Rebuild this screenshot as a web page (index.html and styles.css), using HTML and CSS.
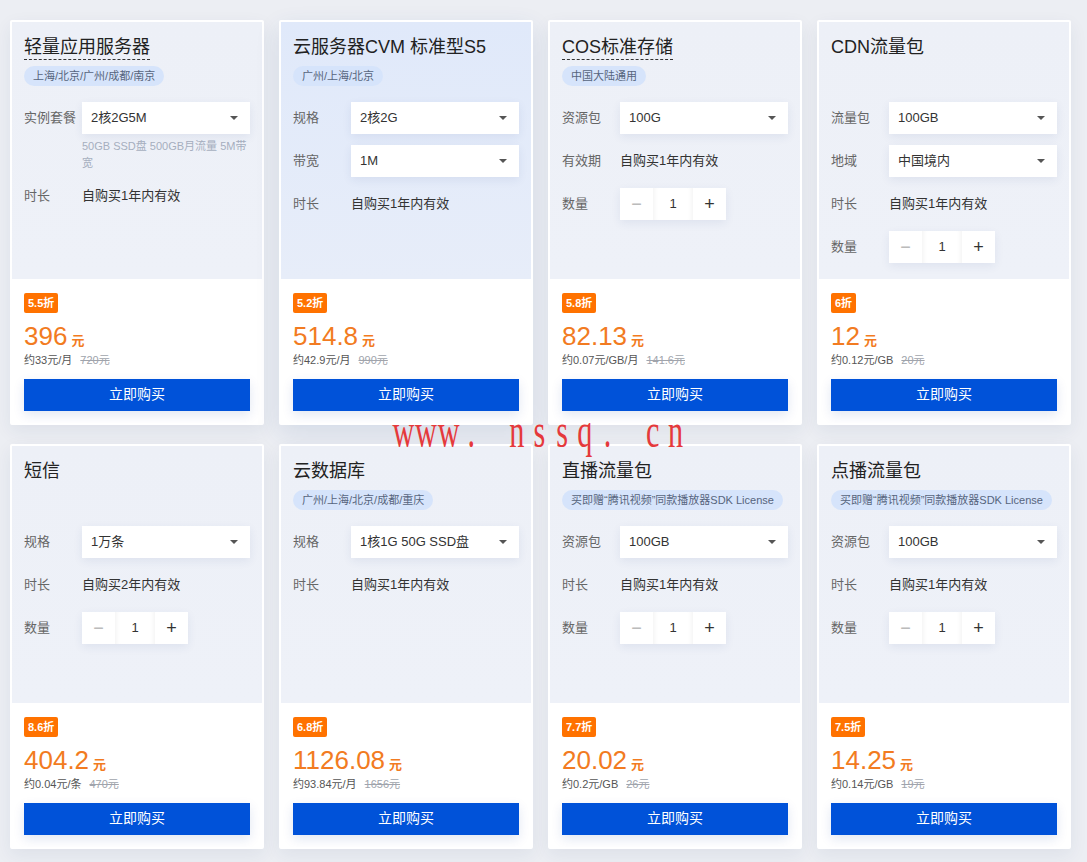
FILE: index.html
```html
<!DOCTYPE html>
<html lang="zh-CN">
<head>
<meta charset="utf-8">
<title>产品</title>
<link rel="stylesheet" href="styles.css">
</head>
<body>
<div class="grid">

  <div class="card">
    <div class="card-top">
      <div class="title"><span class="dashed">轻量应用服务器</span></div>
      <div class="tags"><span class="tag">上海/北京/广州/成都/南京</span></div>
      <div class="form">
        <div class="row"><span class="label">实例套餐</span><div class="select">2核2G5M<i class="caret"></i></div></div>
        <div class="help">50GB SSD盘 500GB月流量 5M带宽</div>
        <div class="row"><span class="label">时长</span><span class="value">自购买1年内有效</span></div>
      </div>
    </div>
    <div class="card-bottom">
      <span class="badge">5.5折</span>
      <div class="price">396<span class="unit">元</span></div>
      <div class="sub">约33元/月<s class="orig">720元</s></div>
      <button class="buy">立即购买</button>
    </div>
  </div>

  <div class="card active">
    <div class="card-top">
      <div class="title"><span>云服务器CVM 标准型S5</span></div>
      <div class="tags"><span class="tag">广州/上海/北京</span></div>
      <div class="form">
        <div class="row"><span class="label">规格</span><div class="select">2核2G<i class="caret"></i></div></div>
        <div class="row"><span class="label">带宽</span><div class="select">1M<i class="caret"></i></div></div>
        <div class="row"><span class="label">时长</span><span class="value">自购买1年内有效</span></div>
      </div>
    </div>
    <div class="card-bottom">
      <span class="badge">5.2折</span>
      <div class="price">514.8<span class="unit">元</span></div>
      <div class="sub">约42.9元/月<s class="orig">990元</s></div>
      <button class="buy">立即购买</button>
    </div>
  </div>

  <div class="card">
    <div class="card-top">
      <div class="title"><span class="dashed">COS标准存储</span></div>
      <div class="tags"><span class="tag">中国大陆通用</span></div>
      <div class="form">
        <div class="row"><span class="label">资源包</span><div class="select">100G<i class="caret"></i></div></div>
        <div class="row"><span class="label">有效期</span><span class="value">自购买1年内有效</span></div>
        <div class="row"><span class="label">数量</span><div class="stepper"><span class="step minus">−</span><span class="num">1</span><span class="step plus">+</span></div></div>
      </div>
    </div>
    <div class="card-bottom">
      <span class="badge">5.8折</span>
      <div class="price">82.13<span class="unit">元</span></div>
      <div class="sub">约0.07元/GB/月<s class="orig">141.6元</s></div>
      <button class="buy">立即购买</button>
    </div>
  </div>

  <div class="card">
    <div class="card-top">
      <div class="title"><span>CDN流量包</span></div>
      <div class="tags"></div>
      <div class="form">
        <div class="row"><span class="label">流量包</span><div class="select">100GB<i class="caret"></i></div></div>
        <div class="row"><span class="label">地域</span><div class="select">中国境内<i class="caret"></i></div></div>
        <div class="row"><span class="label">时长</span><span class="value">自购买1年内有效</span></div>
        <div class="row"><span class="label">数量</span><div class="stepper"><span class="step minus">−</span><span class="num">1</span><span class="step plus">+</span></div></div>
      </div>
    </div>
    <div class="card-bottom">
      <span class="badge">6折</span>
      <div class="price">12<span class="unit">元</span></div>
      <div class="sub">约0.12元/GB<s class="orig">20元</s></div>
      <button class="buy">立即购买</button>
    </div>
  </div>

  <div class="card">
    <div class="card-top">
      <div class="title"><span>短信</span></div>
      <div class="tags"></div>
      <div class="form">
        <div class="row"><span class="label">规格</span><div class="select">1万条<i class="caret"></i></div></div>
        <div class="row"><span class="label">时长</span><span class="value">自购买2年内有效</span></div>
        <div class="row"><span class="label">数量</span><div class="stepper"><span class="step minus">−</span><span class="num">1</span><span class="step plus">+</span></div></div>
      </div>
    </div>
    <div class="card-bottom">
      <span class="badge">8.6折</span>
      <div class="price">404.2<span class="unit">元</span></div>
      <div class="sub">约0.04元/条<s class="orig">470元</s></div>
      <button class="buy">立即购买</button>
    </div>
  </div>

  <div class="card">
    <div class="card-top">
      <div class="title"><span>云数据库</span></div>
      <div class="tags"><span class="tag">广州/上海/北京/成都/重庆</span></div>
      <div class="form">
        <div class="row"><span class="label">规格</span><div class="select">1核1G 50G SSD盘<i class="caret"></i></div></div>
        <div class="row"><span class="label">时长</span><span class="value">自购买1年内有效</span></div>
      </div>
    </div>
    <div class="card-bottom">
      <span class="badge">6.8折</span>
      <div class="price">1126.08<span class="unit">元</span></div>
      <div class="sub">约93.84元/月<s class="orig">1656元</s></div>
      <button class="buy">立即购买</button>
    </div>
  </div>

  <div class="card">
    <div class="card-top">
      <div class="title"><span>直播流量包</span></div>
      <div class="tags"><span class="tag">买即赠“腾讯视频”同款播放器SDK License</span></div>
      <div class="form">
        <div class="row"><span class="label">资源包</span><div class="select">100GB<i class="caret"></i></div></div>
        <div class="row"><span class="label">时长</span><span class="value">自购买1年内有效</span></div>
        <div class="row"><span class="label">数量</span><div class="stepper"><span class="step minus">−</span><span class="num">1</span><span class="step plus">+</span></div></div>
      </div>
    </div>
    <div class="card-bottom">
      <span class="badge">7.7折</span>
      <div class="price">20.02<span class="unit">元</span></div>
      <div class="sub">约0.2元/GB<s class="orig">26元</s></div>
      <button class="buy">立即购买</button>
    </div>
  </div>

  <div class="card">
    <div class="card-top">
      <div class="title"><span>点播流量包</span></div>
      <div class="tags"><span class="tag">买即赠“腾讯视频”同款播放器SDK License</span></div>
      <div class="form">
        <div class="row"><span class="label">资源包</span><div class="select">100GB<i class="caret"></i></div></div>
        <div class="row"><span class="label">时长</span><span class="value">自购买1年内有效</span></div>
        <div class="row"><span class="label">数量</span><div class="stepper"><span class="step minus">−</span><span class="num">1</span><span class="step plus">+</span></div></div>
      </div>
    </div>
    <div class="card-bottom">
      <span class="badge">7.5折</span>
      <div class="price">14.25<span class="unit">元</span></div>
      <div class="sub">约0.14元/GB<s class="orig">19元</s></div>
      <button class="buy">立即购买</button>
    </div>
  </div>

</div>
<div class="watermark"><span>w</span><span>w</span><span>w</span><span>.</span><span> </span><span>n</span><span>s</span><span>s</span><span>q</span><span>.</span><span> </span><span>c</span><span>n</span></div>
</body>
</html>
```

FILE: styles.css
```css
* { box-sizing: border-box; }

html, body {
  margin: 0;
  padding: 0;
}

body {
  background: #eceef3;
  font-family: "Liberation Sans", "Noto Sans CJK SC", sans-serif;
  color: #333;
  position: relative;
  width: 1087px;
  height: 862px;
  overflow: hidden;
}

.grid {
  display: grid;
  grid-template-columns: repeat(4, 254px);
  grid-auto-rows: 405px;
  column-gap: 15px;
  row-gap: 19px;
  padding: 20px 0 0 10px;
}

.card {
  display: flex;
  flex-direction: column;
  border: 2px solid #fff;
  border-radius: 2px;
  background: #fff;
  box-shadow: 0 6px 18px rgba(30, 55, 100, 0.07);
  overflow: hidden;
}

.card-top {
  height: 257px;
  flex: none;
  padding: 13px 12px 0;
  background: linear-gradient(180deg, #edf0f7 0%, #eef1f8 100%);
}

.card.active {
  border-color: transparent;
  box-shadow: 0 8px 24px rgba(30, 70, 140, 0.12);
}

.card.active .card-top {
  background: linear-gradient(180deg, #e0e9fa 0%, #e7edf9 100%);
}

.title {
  height: 25px;
  font-size: 18px;
  line-height: 24px;
  color: #222;
}

.title span {
  display: inline-block;
  border-bottom: 1px solid transparent;
}

.title .dashed {
  border-bottom: 1px dashed #333;
}

.tags {
  height: 20px;
  margin-top: 6px;
}

.tag {
  display: inline-block;
  height: 20px;
  line-height: 20px;
  padding: 0 9px;
  border-radius: 10px;
  background: #d6e4fb;
  color: #56647d;
  font-size: 11px;
  white-space: nowrap;
}

.form {
  margin-top: 16px;
}

.row {
  display: flex;
  align-items: center;
  height: 32px;
  margin-bottom: 11px;
  line-height: 18px;
}

.label {
  width: 58px;
  flex: none;
  font-size: 13px;
  color: #666;
}

.value {
  font-size: 13px;
  color: #333;
}

.select {
  position: relative;
  width: 168px;
  height: 32px;
  line-height: 32px;
  padding-left: 9px;
  background: #fff;
  font-size: 13px;
  color: #333;
  box-shadow: 0 3px 10px rgba(40, 70, 130, 0.08);
}

.caret {
  position: absolute;
  right: 12px;
  top: 14px;
  width: 0;
  height: 0;
  border-left: 4px solid transparent;
  border-right: 4px solid transparent;
  border-top: 4px solid #555;
}

.help {
  margin: -7px 0 8px 58px;
  width: 168px;
  font-size: 11px;
  line-height: 17px;
  color: #a6afbf;
}

.stepper {
  display: flex;
  height: 32px;
  box-shadow: 0 3px 10px rgba(40, 70, 130, 0.08);
}

.step, .num {
  display: flex;
  align-items: center;
  justify-content: center;
  height: 32px;
  background: #fff;
}

.step {
  width: 33px;
  font-size: 18px;
  color: #333;
}

.step.minus {
  color: #bbb;
}

.num {
  width: 40px;
  font-size: 13px;
  color: #333;
  box-shadow: inset 6px 0 6px -6px rgba(0, 0, 0, 0.08), inset -6px 0 6px -6px rgba(0, 0, 0, 0.08);
}

.card-bottom {
  flex: 1;
  padding: 14px 12px 12px;
  background: #fff;
  display: flex;
  flex-direction: column;
  align-items: flex-start;
}

.badge {
  display: inline-block;
  height: 20px;
  line-height: 20px;
  padding: 0 4px;
  background: #ff7200;
  color: #fff;
  font-size: 11px;
  font-weight: bold;
  border-radius: 2px;
}

.price {
  margin-top: 8px;
  height: 30px;
  line-height: 30px;
  font-size: 26px;
  color: #f27b21;
}

.unit {
  font-size: 13px;
  font-weight: bold;
  margin-left: 4px;
}

.sub {
  margin-top: 1px;
  height: 16px;
  line-height: 16px;
  font-size: 11px;
  color: #555;
}

.orig {
  margin-left: 8px;
  color: #a0a4ac;
}

.buy {
  margin-top: 11px;
  width: 226px;
  height: 32px;
  padding: 0 0 3px;
  border: 0;
  border-radius: 0;
  background: #0052d9;
  color: #fff;
  font-family: inherit;
  font-size: 14px;
  line-height: 18px;
  cursor: pointer;
  box-shadow: 0 4px 12px rgba(0, 60, 160, 0.12);
}

.watermark {
  position: absolute;
  left: 392px;
  top: 407px;
  display: flex;
  font-family: "Liberation Serif", serif;
  font-size: 48px;
  line-height: 48px;
  color: #e5393b;
  transform: scaleX(0.63);
  transform-origin: left top;
  white-space: pre;
  pointer-events: none;
}

.watermark span {
  display: inline-block;
  width: 36px;
  text-align: center;
}
```
